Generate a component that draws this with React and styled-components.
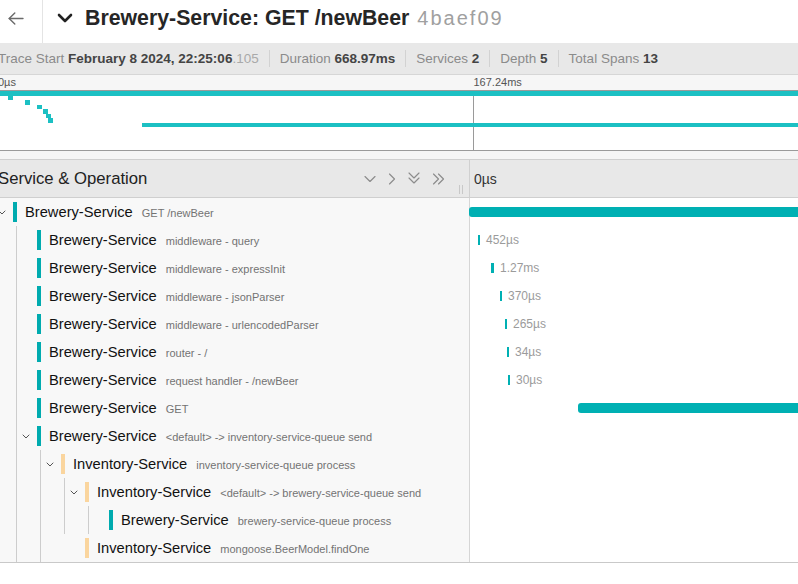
import React from 'react';
import styled, { createGlobalStyle } from 'styled-components';

const Global = createGlobalStyle`
  html, body { margin: 0; padding: 0; background: #fff; }
  body { font-family: "Liberation Sans", Arial, Helvetica, sans-serif; overflow: hidden; }
  * { box-sizing: border-box; }
`;

const TRACE_MS = 668.97;
const PAGE_W = 1914;
const TRACK_PX_PER_MS = 2.137;

const COLORS = {
  brewery: { bar: '#00abaf', mini: '#1cc0c3' },
  inventory: { bar: '#fad59e', mini: '#f7c56f' },
};

const SPANS = [
  { level: 0, svc: 'brewery', name: 'Brewery-Service', op: 'GET /newBeer', start: 0, dur: 668.97, toggle: true, label: '668.97ms' },
  { level: 1, svc: 'brewery', name: 'Brewery-Service', op: 'middleware - query', start: 4.89, dur: 0.452, label: '452µs' },
  { level: 1, svc: 'brewery', name: 'Brewery-Service', op: 'middleware - expressInit', start: 10.83, dur: 1.27, label: '1.27ms' },
  { level: 1, svc: 'brewery', name: 'Brewery-Service', op: 'middleware - jsonParser', start: 15.03, dur: 0.37, label: '370µs' },
  { level: 1, svc: 'brewery', name: 'Brewery-Service', op: 'middleware - urlencodedParser', start: 17.13, dur: 0.265, label: '265µs' },
  { level: 1, svc: 'brewery', name: 'Brewery-Service', op: 'router - /', start: 18.17, dur: 0.034, label: '34µs' },
  { level: 1, svc: 'brewery', name: 'Brewery-Service', op: 'request handler - /newBeer', start: 18.87, dur: 0.03, label: '30µs' },
  { level: 1, svc: 'brewery', name: 'Brewery-Service', op: 'GET', start: 51.7, dur: 612.1, label: '612.1ms' },
  { level: 1, svc: 'brewery', name: 'Brewery-Service', op: '<default> -> inventory-service-queue send', start: 664.9, dur: 1.2, toggle: true, label: '1.2ms' },
  { level: 2, svc: 'inventory', name: 'Inventory-Service', op: 'inventory-service-queue process', start: 665.3, dur: 2.9, toggle: true, label: '2.9ms' },
  { level: 3, svc: 'inventory', name: 'Inventory-Service', op: '<default> -> brewery-service-queue send', start: 665.8, dur: 0.9, toggle: true, label: '900µs' },
  { level: 4, svc: 'brewery', name: 'Brewery-Service', op: 'brewery-service-queue process', start: 666.4, dur: 0.6, label: '600µs' },
  { level: 3, svc: 'inventory', name: 'Inventory-Service', op: 'mongoose.BeerModel.findOne', start: 667.3, dur: 1.4, label: '1.4ms', hiddenGuides: [2] },
];

const Viewport = styled.div`
  width: 798px;
  height: 584px;
  overflow: hidden;
  background: #fff;
`;

const Page = styled.div`
  width: ${PAGE_W}px;
  margin-left: -6px;
`;

/* ---------- title header ---------- */
const TitleBar = styled.header`
  display: flex;
  align-items: center;
  height: 43px;
  background: #fff;
`;

const BackButton = styled.div`
  width: 49px;
  height: 43px;
  flex: none;
  display: flex;
  align-items: center;
  justify-content: center;
  padding: 0 4px 6px 0;
  border-right: 1px solid #e4e4e4;
  color: #6a6a6a;
`;

const TitleToggle = styled.div`
  margin-left: 14px;
  display: flex;
  align-items: center;
  padding-bottom: 8px;
  color: #222;
`;

const Title = styled.h1`
  margin: 0 0 0 12px;
  padding-bottom: 7px;
  font-size: 21.3px;
  font-weight: 700;
  color: #262626;
  white-space: nowrap;
  display: flex;
  align-items: baseline;
`;

const TraceId = styled.small`
  margin-left: 8px;
  font-size: 20px;
  font-weight: 400;
  letter-spacing: 2px;
  color: #a0a0a0;
`;

/* ---------- summary ---------- */
const Summary = styled.ul`
  display: flex;
  align-items: center;
  height: 32px;
  margin: 0;
  padding: 0 0 0 4px;
  list-style: none;
  background: #e8e8e8;
  border-bottom: 1px solid #d6d6d6;
  font-size: 13.5px;
  color: #8b8b8b;
  white-space: nowrap;
`;

const SummaryItem = styled.li`
  padding: 1px 10px 0;
  line-height: 16px;
  border-left: 1px solid #d2d2d2;
  &:first-child {
    padding-left: 0;
    border-left: none;
  }
`;

const Strong = styled.strong`
  color: #444;
  font-weight: 700;
`;

const Millis = styled.span`
  color: #a9a9a9;
`;

/* ---------- minimap ---------- */
const TickRow = styled.div`
  position: relative;
  height: 16px;
  background: #f6f6f6;
  border-bottom: 1px solid #9a9a9a;
`;

const TickLabel = styled.span`
  position: absolute;
  top: 1px;
  padding-left: 1px;
  font-size: 11px;
  color: #555;
  white-space: nowrap;
`;

const Canvas = styled.div`
  position: relative;
  height: 60px;
  background: #fff;
  border-bottom: 1px solid #9a9a9a;
  overflow: hidden;
`;

const CanvasTick = styled.div`
  position: absolute;
  top: 0;
  bottom: 0;
  width: 1px;
  background: #9a9a9a;
`;

const MiniSpan = styled.div`
  position: absolute;
  height: 4.54px;
  min-width: 4.6px;
  background: ${(p) => COLORS[p.$svc].mini};
`;

const Gap = styled.div`
  height: 8px;
  background: #f5f5f5;
`;

/* ---------- table header ---------- */
const TableHeader = styled.div`
  display: flex;
  height: 39px;
  border-top: 1px solid #cfcfcf;
  border-bottom: 1px solid #cfcfcf;
  background: #e8e8e8;
`;

const HeaderLeft = styled.div`
  position: relative;
  width: 476px;
  flex: none;
  display: flex;
  align-items: center;
  padding-left: 4px;
  border-right: 1px solid #d0d0d0;
`;

const HeaderTitle = styled.h3`
  margin: 0;
  font-size: 16.7px;
  font-weight: 400;
  color: #222;
  white-space: nowrap;
`;

const HeaderTools = styled.div`
  margin-left: auto;
  margin-right: 24px;
  display: flex;
  align-items: center;
  gap: 12px;
  color: #8c8c8c;
`;

const ToolIcon = styled.svg`
  display: block;
  fill: none;
  stroke: currentColor;
  stroke-width: 1.15;
  stroke-linecap: round;
  stroke-linejoin: round;
`;

const Resizer = styled.div`
  position: absolute;
  right: 6px;
  bottom: 3px;
  width: 4px;
  height: 9px;
  border-left: 1px solid #c8c8c8;
  border-right: 1px solid #c8c8c8;
`;

const HeaderRight = styled.div`
  flex: 1;
  display: flex;
  align-items: center;
  padding-left: 4px;
  font-size: 14px;
  color: #333;
`;

/* ---------- rows ---------- */
const Rows = styled.div`
  border-bottom: 1px solid #c9c9c9;
`;

const Row = styled.div`
  display: flex;
  height: 28px;
`;

const RowLeft = styled.div`
  width: 476px;
  flex: none;
  display: flex;
  align-items: center;
  padding-left: 4px;
  background: #f8f8f8;
  border-right: 1px solid #d6d6d6;
  overflow: hidden;
`;

const Guide = styled.span`
  position: relative;
  width: 24px;
  align-self: stretch;
  flex: none;
  &::before {
    content: '';
    position: absolute;
    left: 18px;
    top: 0;
    bottom: 0;
    width: 1px;
    background: ${(p) => (p.$hidden ? 'transparent' : '#cdcdcd')};
  }
`;

const Toggle = styled.span`
  width: 8px;
  flex: none;
  display: flex;
  align-items: center;
  color: #555;
`;

const ServiceBar = styled.span`
  width: 4px;
  height: 20px;
  margin-left: 7px;
  flex: none;
  background: ${(p) => COLORS[p.$svc].bar};
`;

const Names = styled.span`
  display: flex;
  align-items: baseline;
  margin-left: 8px;
  white-space: nowrap;
`;

const SvcName = styled.span`
  font-size: 14.7px;
  color: #111;
`;

const OpName = styled.span`
  margin-left: 9px;
  font-size: 11px;
  color: #737373;
`;

const RowRight = styled.div`
  position: relative;
  flex: 1;
  background: #fff;
`;

const SpanBar = styled.div`
  position: absolute;
  top: 9px;
  height: 10px;
  border-radius: ${(p) => (p.$long ? '3px' : '0')};
  background: #00b0b3;
`;

const Duration = styled.span`
  position: absolute;
  top: 7px;
  font-size: 12px;
  line-height: 14px;
  color: #9b9b9b;
  white-space: nowrap;
`;

/* ---------- icons ---------- */
const ArrowLeft = () => (
  <svg width="16" height="13" viewBox="0 0 16 13" fill="none" stroke="currentColor" strokeWidth="1.4" strokeLinecap="round" strokeLinejoin="round">
    <path d="M15 6.5H1.2" />
    <path d="M6.8 1L1.2 6.5L6.8 12" />
  </svg>
);

const ChevronDownBold = () => (
  <svg width="16" height="10" viewBox="0 0 16 10" fill="none" stroke="currentColor" strokeWidth="2.6" strokeLinecap="round" strokeLinejoin="round">
    <path d="M2 2L8 8L14 2" />
  </svg>
);

const RowChevron = () => (
  <svg width="8" height="5" viewBox="0 0 8 5" fill="none" stroke="currentColor" strokeWidth="1" strokeLinecap="round" strokeLinejoin="round">
    <path d="M1 1L4 4L7 1" />
  </svg>
);

const Tools = () => (
  <HeaderTools>
    <ToolIcon width="12" height="8" viewBox="0 0 12 8">
      <path d="M1 1.5L6 6.5L11 1.5" />
    </ToolIcon>
    <ToolIcon width="8" height="12" viewBox="0 0 8 12">
      <path d="M1.5 1L6.5 6L1.5 11" />
    </ToolIcon>
    <ToolIcon width="12" height="13" viewBox="0 0 12 13">
      <path d="M1 1L6 6L11 1" />
      <path d="M1 6L6 11L11 6" />
    </ToolIcon>
    <ToolIcon width="13" height="12" viewBox="0 0 13 12">
      <path d="M1.5 1L6.5 6L1.5 11" />
      <path d="M6.5 1L11.5 6L6.5 11" />
    </ToolIcon>
  </HeaderTools>
);

const pct = (ms) => `${(ms / TRACE_MS) * 100}%`;

export default function App() {
  return (
    <Viewport>
      <Global />
      <Page>
        <TitleBar>
          <BackButton>
            <ArrowLeft />
          </BackButton>
          <TitleToggle>
            <ChevronDownBold />
          </TitleToggle>
          <Title>
            Brewery-Service: GET /newBeer
            <TraceId>4baef09</TraceId>
          </Title>
        </TitleBar>

        <Summary>
          <SummaryItem>
            Trace Start <Strong>February 8 2024, 22:25:06</Strong>
            <Millis>.105</Millis>
          </SummaryItem>
          <SummaryItem>
            Duration <Strong>668.97ms</Strong>
          </SummaryItem>
          <SummaryItem>
            Services <Strong>2</Strong>
          </SummaryItem>
          <SummaryItem>
            Depth <Strong>5</Strong>
          </SummaryItem>
          <SummaryItem>
            Total Spans <Strong>13</Strong>
          </SummaryItem>
        </Summary>

        <TickRow>
          <TickLabel style={{ left: '3px' }}>0µs</TickLabel>
          <TickLabel style={{ left: '25%' }}>167.24ms</TickLabel>
          <TickLabel style={{ left: '50%' }}>334.49ms</TickLabel>
          <TickLabel style={{ left: '75%' }}>501.73ms</TickLabel>
        </TickRow>
        <Canvas>
          {[0.25, 0.5, 0.75].map((f) => (
            <CanvasTick key={f} style={{ left: `${f * 100}%` }} />
          ))}
          {SPANS.map((s, i) => (
            <MiniSpan
              key={i}
              $svc={s.svc}
              style={{ left: pct(s.start), width: pct(s.dur), top: `${i * 4.54}px` }}
            />
          ))}
        </Canvas>
        <Gap />

        <TableHeader>
          <HeaderLeft>
            <HeaderTitle>Service &amp; Operation</HeaderTitle>
            <Tools />
            <Resizer />
          </HeaderLeft>
          <HeaderRight>0µs</HeaderRight>
        </TableHeader>

        <Rows>
          {SPANS.map((s, i) => {
            const left = Math.max(-1, s.start * TRACK_PX_PER_MS - 2);
            const width = Math.max(2, s.dur * TRACK_PX_PER_MS);
            const hidden = s.hiddenGuides || [];
            return (
              <Row key={i}>
                <RowLeft>
                  {Array.from({ length: s.level }).map((_, g) => (
                    <Guide key={g} $hidden={hidden.includes(g)} />
                  ))}
                  <Toggle>{s.toggle ? <RowChevron /> : null}</Toggle>
                  <ServiceBar $svc={s.svc} />
                  <Names>
                    <SvcName>{s.name}</SvcName>
                    <OpName>{s.op}</OpName>
                  </Names>
                </RowLeft>
                <RowRight>
                  <SpanBar $long={width > 10} style={{ left: `${Math.round(left)}px`, width: `${width}px` }} />
                  <Duration style={{ left: `${Math.round(left + width + 6)}px` }}>{s.label}</Duration>
                </RowRight>
              </Row>
            );
          })}
        </Rows>
      </Page>
    </Viewport>
  );
}
